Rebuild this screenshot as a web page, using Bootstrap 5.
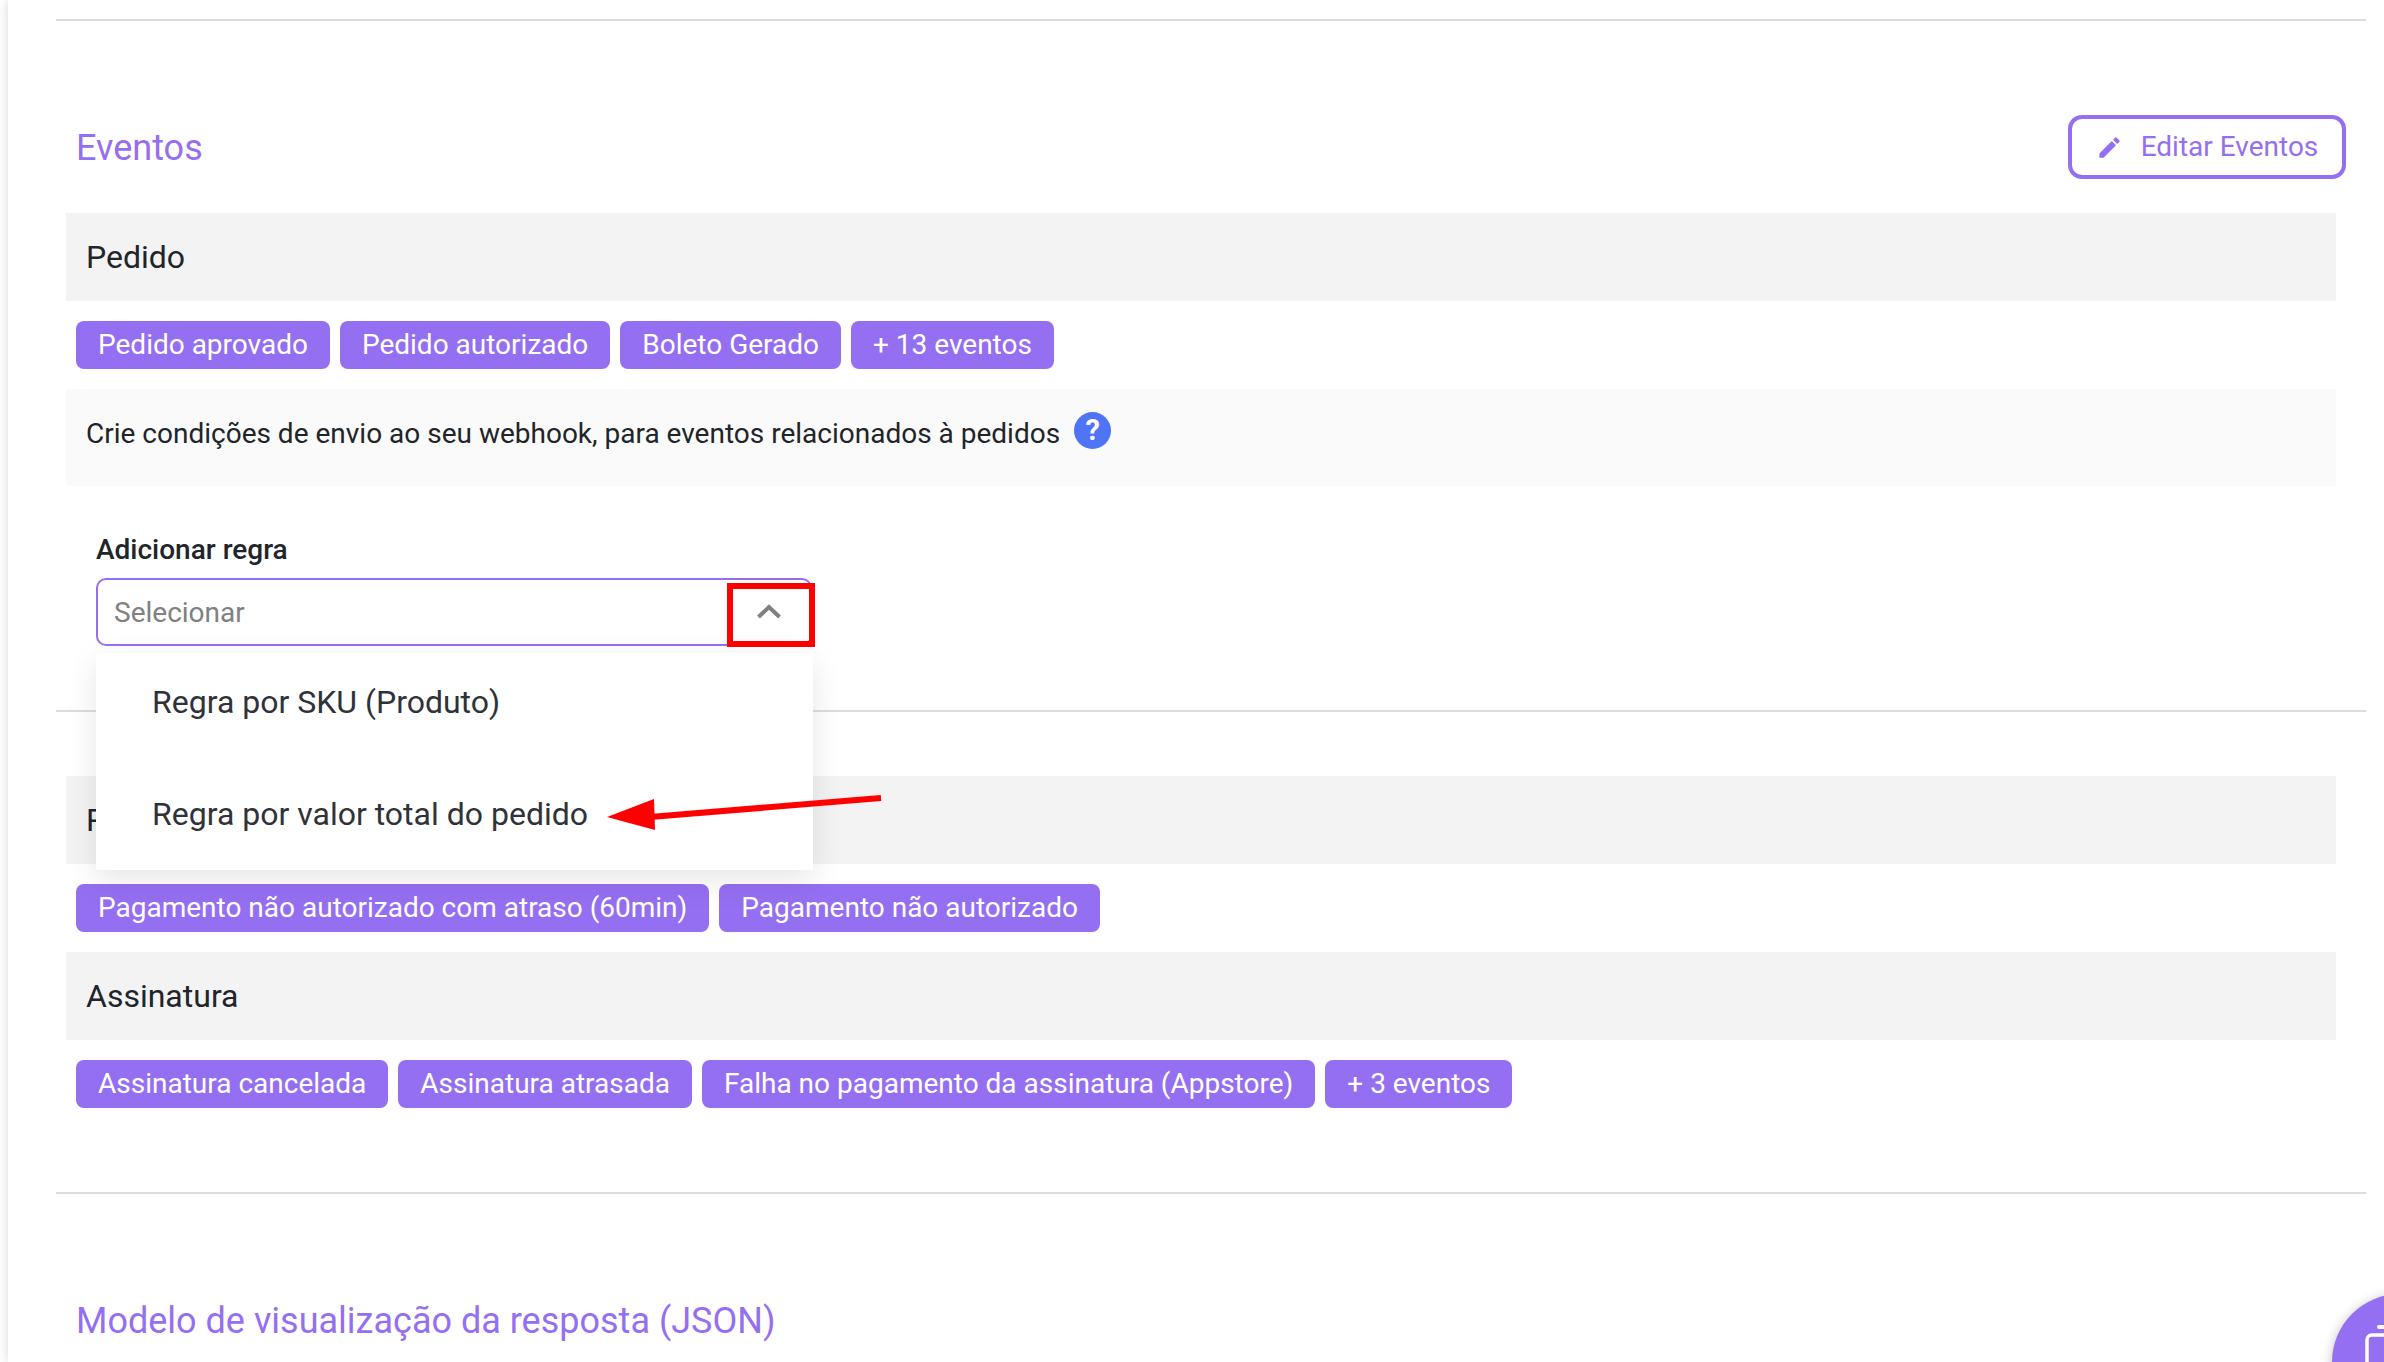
<!DOCTYPE html>
<html lang="pt-BR">
<head>
<meta charset="utf-8">
<title>Eventos</title>
<link href="https://cdn.jsdelivr.net/npm/bootstrap@5.3.0/dist/css/bootstrap.min.css" rel="stylesheet">
<style>
html,body{height:1362px;overflow:hidden;background:#fff;}
body{font-family:Roboto,"Liberation Sans",sans-serif;color:#212529;}
.page-shell{height:1362px;margin-left:8px;padding-left:48px;padding-top:19px;box-shadow:0 0 10px rgba(0,0,0,.16);background:#fff;overflow:hidden;position:relative;}
.rule{height:2px;background:#ddd;}
.rule-1{margin-right:18px;}
.head-row{height:192px;padding:94px 38px 0 20px;align-items:flex-start;}
.sec-title{font-size:36px;line-height:66px;color:#956ff1;font-weight:400;margin:0;}
.edit-btn{width:278px;height:64px;border:4px solid #956ff1;border-radius:14px;color:#956ff1;font-size:28px;background:#fff;gap:18px;}
.edit-btn svg{width:27px;height:27px;}
.bands{margin:0 48px 0 10px;}
.band-head{height:88px;background:#f3f3f3;padding-left:20px;font-size:32px;color:#212529;}
.chip-row{padding:20px 10px;gap:10px;}
.chip-item{height:48px;background:#956ff1;color:#fff;border-radius:8px;padding:0 22px;font-size:28px;line-height:48px;white-space:nowrap;}
.desc-box{height:97px;background:#fafafa;padding-left:20px;padding-bottom:7px;font-size:28px;gap:14px;}
.help-dot{width:37px;height:37px;border-radius:50%;background:#4f74f5;color:#fff;font-size:29px;font-weight:700;line-height:37px;text-align:center;margin-bottom:7px;}
.rule-box{height:224px;padding:44px 0 0 30px;}
.rule-label{font-size:28px;font-weight:500;line-height:40px;margin-bottom:8px;}
.rule-input{width:716px;height:68px;border:2px solid #956ff1;border-radius:10px;padding:2px 0 0 16px;font-size:28px;color:#808080;background:#fff;}
.band-rule{margin-left:-10px;margin-right:-30px;}
.gap-after{margin-bottom:64px;}
.gap-before{margin-top:64px;}
.drop-panel{position:absolute;left:96px;top:653px;width:717px;height:217px;background:#fff;box-shadow:0 10px 30px rgba(0,0,0,.10);z-index:5;}
.drop-line{height:98px;padding-left:56px;font-size:32px;color:#2f3338;}
.drop-line-2{height:111px;margin-top:7px;}
.red-frame{position:absolute;left:727px;top:583px;width:88px;height:64px;border:6px solid #f00;z-index:6;}
.chevron{position:absolute;left:757px;top:604px;width:24px;height:15px;z-index:7;}
.arrow-mark{position:absolute;left:600px;top:790px;width:290px;height:50px;z-index:8;}
.fab-btn{position:absolute;left:2332px;top:1294px;width:136px;height:136px;border-radius:50%;background:#956ff1;box-shadow:0 2px 12px rgba(0,0,0,.25);z-index:9;}
.fab-icon{position:absolute;left:2361px;top:1321px;width:40px;height:44px;z-index:10;}
.title-2{margin-left:20px;margin-top:94px;}
</style>
</head>
<body>
<div class="page-shell">
  <div class="rule rule-1"></div>
  <div class="d-flex justify-content-between head-row">
    <h2 class="sec-title">Eventos</h2>
    <button class="edit-btn d-flex align-items-center justify-content-center" type="button">
      <svg viewBox="0 0 24 24" fill="#956ff1"><path d="M3 17.25V21h3.75L17.81 9.94l-3.75-3.75L3 17.25zM20.71 7.04a1 1 0 0 0 0-1.41l-2.34-2.34a1 1 0 0 0-1.41 0l-1.83 1.83 3.75 3.75 1.83-1.83z"/></svg>
      <span>Editar Eventos</span>
    </button>
  </div>
  <div class="bands">
    <div class="band-head d-flex align-items-center">Pedido</div>
    <div class="chip-row d-flex">
      <span class="chip-item">Pedido aprovado</span>
      <span class="chip-item">Pedido autorizado</span>
      <span class="chip-item">Boleto Gerado</span>
      <span class="chip-item">+ 13 eventos</span>
    </div>
    <div class="desc-box d-flex align-items-center">
      <span>Crie condições de envio ao seu webhook, para eventos relacionados à pedidos</span>
      <span class="help-dot">?</span>
    </div>
    <div class="rule-box">
      <div class="rule-label">Adicionar regra</div>
      <div class="rule-input d-flex align-items-center">Selecionar</div>
    </div>
    <div class="rule band-rule gap-after"></div>
    <div class="band-head d-flex align-items-center">Pagamento</div>
    <div class="chip-row d-flex">
      <span class="chip-item">Pagamento não autorizado com atraso (60min)</span>
      <span class="chip-item">Pagamento não autorizado</span>
    </div>
    <div class="band-head d-flex align-items-center">Assinatura</div>
    <div class="chip-row d-flex">
      <span class="chip-item">Assinatura cancelada</span>
      <span class="chip-item">Assinatura atrasada</span>
      <span class="chip-item">Falha no pagamento da assinatura (Appstore)</span>
      <span class="chip-item">+ 3 eventos</span>
    </div>
    <div class="rule band-rule gap-before"></div>
  </div>
  <h2 class="sec-title title-2">Modelo de visualização da resposta (JSON)</h2>
</div>
<div class="drop-panel">
  <div class="drop-line d-flex align-items-center">Regra por SKU (Produto)</div>
  <div class="drop-line drop-line-2 d-flex align-items-center">Regra por valor total do pedido</div>
</div>
<div class="red-frame"></div>
<svg class="chevron" viewBox="0 0 24 15"><path d="M1.5 13 12 3l10.5 10" fill="none" stroke="#808080" stroke-width="4"/></svg>
<svg class="arrow-mark" viewBox="0 0 290 50"><path d="M281 8 50 27" stroke="#f00" stroke-width="6" fill="none"/><path d="M7 27 54 9 55 40z" fill="#f00"/></svg>
<div class="fab-btn"></div>
<svg class="fab-icon" viewBox="0 0 40 44"><rect x="6" y="14" width="40" height="40" rx="5" fill="none" stroke="#fff" stroke-width="3.5"/><path d="M18 6h20" stroke="#fff" stroke-width="4" stroke-linecap="round"/></svg>
<script src="https://cdn.jsdelivr.net/npm/bootstrap@5.3.0/dist/js/bootstrap.bundle.min.js"></script>
</body>
</html>
